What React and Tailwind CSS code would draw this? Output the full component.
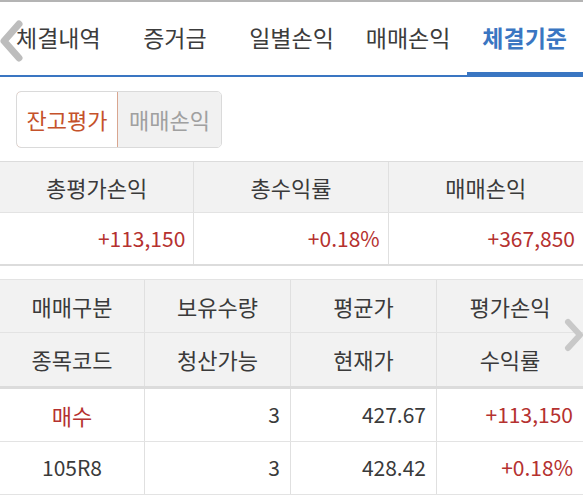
const tabs = ["체결내역", "증거금", "일별손익", "매매손익", "체결기준"];

const font = { fontFamily: '"Noto Sans CJK KR", "Noto Sans", sans-serif' };

const Cell = ({ children, className = "" }) => (
  <div className={`flex items-center border-r border-[#e0e0e0] last:border-r-0 ${className}`}>
    {children}
  </div>
);

export default function App() {
  return (
    <div className="w-[583px] h-[496px] bg-white overflow-hidden relative text-[#3a3a3a]" style={font}>
      {/* tab bar */}
      <div className="border-t-2 border-[#b4b4b4]">
        <div className="relative flex h-[75px] border-b-2 border-[#3a76c2]">
          {tabs.map((t, i) => (
            <div
              key={t}
              className={`flex-1 flex items-center justify-center text-[23px] pb-[2px] ${
                i === 4 ? "text-[#3a76c2] font-semibold" : "text-[#3c3c3c]"
              }`}
            >
              {t}
            </div>
          ))}
          <div className="absolute right-0 bottom-[-2px] w-[116px] h-[5px] bg-[#3a76c2]" />
          <svg className="absolute left-0 top-[18px]" width="24" height="42" viewBox="0 0 24 42">
            <polyline points="19,4 4,21 19,38" fill="none" stroke="#bdbdbd" strokeWidth="7" strokeLinecap="round" strokeLinejoin="round" />
          </svg>
        </div>
      </div>

      {/* toggle */}
      <div className="flex pl-[16px] pt-[14px]">
        <div className="flex h-[57px] rounded-[5px] overflow-hidden border border-[#dadada]">
          <div className="w-[102px] flex items-center justify-center text-[22px] text-[#c5522b] bg-white border border-[#d9a690] rounded-l-[5px] -m-px mr-0">
            잔고평가
          </div>
          <div className="w-[103px] flex items-center justify-center text-[22px] text-[#a0a0a0] bg-[#f1f1f1]">
            매매손익
          </div>
        </div>
      </div>

      {/* summary table */}
      <div className="mt-[13px] border-t border-b-2 border-[#dcdcdc]">
        <div className="grid grid-cols-3 h-[51px] bg-[#f2f2f2] border-b border-[#e3e3e3] text-[22px]">
          <Cell className="justify-center">총평가손익</Cell>
          <Cell className="justify-center">총수익률</Cell>
          <Cell className="justify-center">매매손익</Cell>
        </div>
        <div className="grid grid-cols-3 h-[51px] text-[21px] text-[#b5312f]">
          <Cell className="justify-end pr-[8px]">+113,150</Cell>
          <Cell className="justify-end pr-[8px]">+0.18%</Cell>
          <Cell className="justify-end pr-[8px]">+367,850</Cell>
        </div>
      </div>

      {/* holdings table */}
      <div className="mt-[13px] border-t border-[#e3e3e3] text-[22px]">
        <div className="bg-[#f2f2f2] border-b-[3px] border-[#dcdcdc]">
          <div className="grid grid-cols-[145px_146px_146px_146px] h-[53px] border-b border-[#e3e3e3]">
            <Cell className="justify-center">매매구분</Cell>
            <Cell className="justify-center">보유수량</Cell>
            <Cell className="justify-center">평균가</Cell>
            <Cell className="justify-center">평가손익</Cell>
          </div>
          <div className="grid grid-cols-[145px_146px_146px_146px] h-[53px]">
            <Cell className="justify-center">종목코드</Cell>
            <Cell className="justify-center">청산가능</Cell>
            <Cell className="justify-center">현재가</Cell>
            <Cell className="justify-center">수익률</Cell>
          </div>
        </div>
        <div className="grid grid-cols-[145px_146px_146px_146px] h-[53px] border-b border-[#e3e3e3] text-[21px]">
          <Cell className="justify-center text-[22px] text-[#b5312f]">매수</Cell>
          <Cell className="justify-end pr-[10px]">3</Cell>
          <Cell className="justify-end pr-[10px]">427.67</Cell>
          <Cell className="justify-end pr-[10px] text-[#b5312f]">+113,150</Cell>
        </div>
        <div className="grid grid-cols-[145px_146px_146px_146px] h-[53px] border-b border-[#e3e3e3] text-[21px]">
          <Cell className="justify-center">105R8</Cell>
          <Cell className="justify-end pr-[10px]">3</Cell>
          <Cell className="justify-end pr-[10px]">428.42</Cell>
          <Cell className="justify-end pr-[10px] text-[#b5312f]">+0.18%</Cell>
        </div>
      </div>

      <svg className="absolute left-[562px] top-[318px]" width="22" height="34" viewBox="0 0 22 34">
        <polyline points="6,4 18,17 6,30" fill="none" stroke="#c8c8c8" strokeWidth="6" strokeLinecap="round" strokeLinejoin="round" />
      </svg>
    </div>
  );
}
